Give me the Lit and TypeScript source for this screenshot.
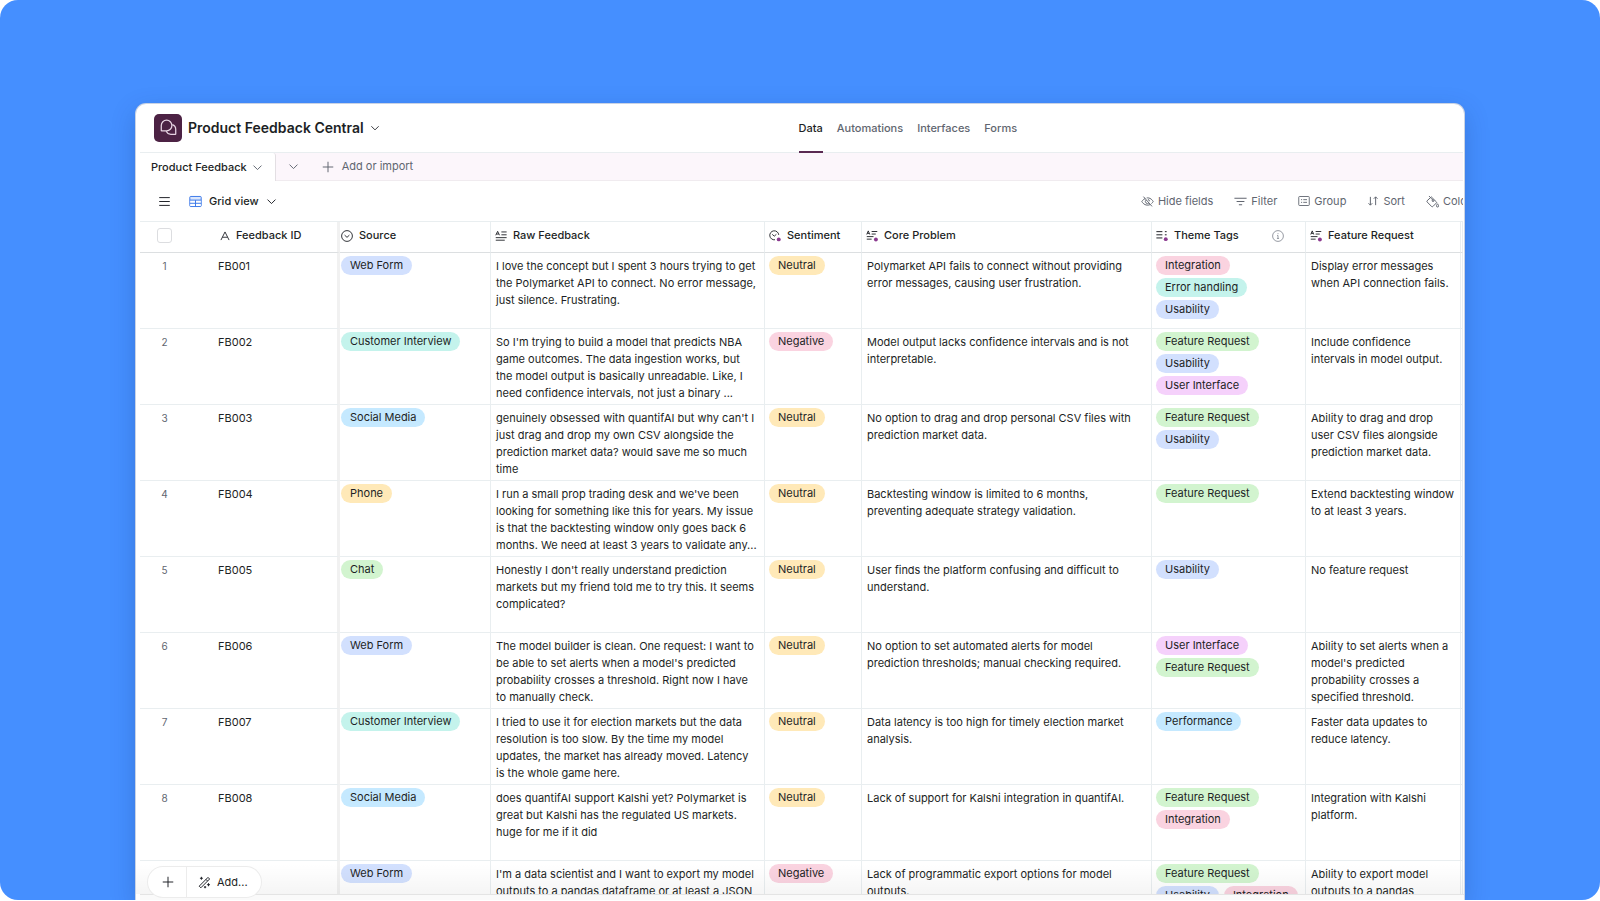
import { LitElement, html, css, svg, nothing, TemplateResult } from "lit";
import { customElement, property, state } from "lit/decorators.js";

type Tone = "blue" | "teal" | "cyan" | "yellow" | "green" | "pink" | "purple";

const TONES: Record<string, Tone> = {
  "Web Form": "blue",
  "Customer Interview": "teal",
  "Social Media": "cyan",
  Phone: "yellow",
  Chat: "green",
  Neutral: "yellow",
  Negative: "pink",
  Integration: "pink",
  "Error handling": "teal",
  Usability: "blue",
  "Feature Request": "green",
  "User Interface": "purple",
  Performance: "cyan",
};

interface Feedback {
  source: string;
  raw: string;
  sentiment: string;
  problem: string;
  tags: string[];
  request: string;
}

const ROWS: Feedback[] = [
  {
    source: "Web Form",
    raw: "I love the concept but I spent 3 hours trying to get the Polymarket API to connect. No error message, just silence. Frustrating.",
    sentiment: "Neutral",
    problem: "Polymarket API fails to connect without providing error messages, causing user frustration.",
    tags: ["Integration", "Error handling", "Usability"],
    request: "Display error messages when API connection fails.",
  },
  {
    source: "Customer Interview",
    raw: "So I'm trying to build a model that predicts NBA game outcomes. The data ingestion works, but the model output is basically unreadable. Like, I need confidence intervals, not just a binary ...",
    sentiment: "Negative",
    problem: "Model output lacks confidence intervals and is not interpretable.",
    tags: ["Feature Request", "Usability", "User Interface"],
    request: "Include confidence intervals in model output.",
  },
  {
    source: "Social Media",
    raw: "genuinely obsessed with quantifAI but why can't I just drag and drop my own CSV alongside the prediction market data? would save me so much time",
    sentiment: "Neutral",
    problem: "No option to drag and drop personal CSV files with prediction market data.",
    tags: ["Feature Request", "Usability"],
    request: "Ability to drag and drop user CSV files alongside prediction market data.",
  },
  {
    source: "Phone",
    raw: "I run a small prop trading desk and we've been looking for something like this for years. My issue is that the backtesting window only goes back 6 months. We need at least 3 years to validate any...",
    sentiment: "Neutral",
    problem: "Backtesting window is limited to 6 months, preventing adequate strategy validation.",
    tags: ["Feature Request"],
    request: "Extend backtesting window to at least 3 years.",
  },
  {
    source: "Chat",
    raw: "Honestly I don't really understand prediction markets but my friend told me to try this. It seems complicated?",
    sentiment: "Neutral",
    problem: "User finds the platform confusing and difficult to understand.",
    tags: ["Usability"],
    request: "No feature request",
  },
  {
    source: "Web Form",
    raw: "The model builder is clean. One request: I want to be able to set alerts when a model's predicted probability crosses a threshold. Right now I have to manually check.",
    sentiment: "Neutral",
    problem: "No option to set automated alerts for model prediction thresholds; manual checking required.",
    tags: ["User Interface", "Feature Request"],
    request: "Ability to set alerts when a model's predicted probability crosses a specified threshold.",
  },
  {
    source: "Customer Interview",
    raw: "I tried to use it for election markets but the data resolution is too slow. By the time my model updates, the market has already moved. Latency is the whole game here.",
    sentiment: "Neutral",
    problem: "Data latency is too high for timely election market analysis.",
    tags: ["Performance"],
    request: "Faster data updates to reduce latency.",
  },
  {
    source: "Social Media",
    raw: "does quantifAI support Kalshi yet? Polymarket is great but Kalshi has the regulated US markets. huge for me if it did",
    sentiment: "Neutral",
    problem: "Lack of support for Kalshi integration in quantifAI.",
    tags: ["Feature Request", "Integration"],
    request: "Integration with Kalshi platform.",
  },
  {
    source: "Web Form",
    raw: "I'm a data scientist and I want to export my model outputs to a pandas dataframe or at least a JSON",
    sentiment: "Negative",
    problem: "Lack of programmatic export options for model outputs.",
    tags: ["Feature Request", "Usability", "Integration"],
    request: "Ability to export model outputs to a pandas",
  },
];

const icon = (size: number, body: TemplateResult | unknown) => html`
  <svg class="icon" width=${size} height=${size} viewBox="0 0 16 16" aria-hidden="true">${body}</svg>
`;

const ICONS = {
  chevron: svg`<path d="M2.200 5.200 8 11l5.800-5.800" stroke-width="1.400"/>`,
  plus: svg`<path d="M8 1v14M1 8h14" stroke-width="1.300"/>`,
  menu: svg`<path d="M1.500 3.200h13M1.500 8h13M1.500 12.800h13" stroke-width="1.200"/>`,
  grid: svg`<rect x="1" y="1.800" width="14" height="12.400" rx="1" fill="#dbe7fd" stroke="#3b77e8"/><path d="M1.600 6.300h12.800v7.300H1.600z" fill="#fff" stroke="none"/><path d="M1 6.300h14M1 10.200h14M8 6.300v8" stroke="#3b77e8"/>`,
  hide: svg`<path d="M3 2l10.500 12M5.200 4.300C2.400 5.600 1 8 1 8s2.200 4.500 7 4.500c1.200 0 2.300-.3 3.200-.7M7 3.600c.3 0 .7-.1 1-.1 4.800 0 7 4.500 7 4.500s-.7 1.400-2.100 2.600M6.300 6.200a2.500 2.500 0 0 0 3.400 3.700M8.500 5.500a2.500 2.500 0 0 1 2 2.200"/>`,
  filter: svg`<path d="M.5 4h15M3.200 8h9.600M6 12h4" stroke-width="1.300"/>`,
  group: svg`<rect x="1" y="2" width="14" height="12" rx="1"/><path d="M4 6.200h1.500M4 9.800h1.500M7 6.200h5M7 9.800h5" />`,
  sort: svg`<path d="M4.500 2.500v11M2 11l2.500 2.500L7 11M11.500 13.500v-11M9 5l2.500-2.500L14 5" stroke-width="1.300"/>`,
  color: svg`<path d="M3.600 1.200l3 3M6.500 2.300l6.300 6.200c.4.400.4.900 0 1.300l-4.400 4.400c-.4.400-1 .4-1.400 0L1.300 8.500c-.4-.4-.4-.9 0-1.300zM6.600 4.200l1.800 2.100"/><circle cx="8.700" cy="7" r="1.100"/><path d="M14.200 10.800s1.300 1.700 1.300 2.700a1.300 1.300 0 0 1-2.600 0c0-1 1.300-2.700 1.300-2.700z"/>`,
  text: svg`<path d="M1.500 14.500 8 1.500l6.500 13M3.900 10h8.200" stroke-width="1.400"/>`,
  select: svg`<circle cx="8" cy="8" r="7.200"/><path d="M4.800 6.800 8 9.800l3.200-3" />`,
  longText: svg`<path d="M1 7 3.500 1.800 6 7M2 5.400h3M8.500 2.600h7M8.500 6.400h7M1 10.200h14.500M1 13.600h12" stroke-width="1.200"/>`,
  aiSelect: svg`<path d="M8 13A6 6 0 1 1 13 6.500M4.300 5.800l2.700 2.400L9.800 5.800" /><circle cx="13" cy="12.500" r="2.600" fill="#8b3a8f" stroke="none"/>`,
  aiText: svg`<path d="M1 6 3 1.200 5 6M1.700 4.500h2.600M7.500 2H15M7.500 5.400h5.500M1 8.800h9M1 12.200h6.500" stroke-width="1.200"/><circle cx="13.200" cy="12.600" r="2.600" fill="#8b3a8f" stroke="none"/>`,
  aiTags: svg`<path d="M.5 2.200h8M.5 6.400h8M.5 10.600h8M11.800 2.200h2.400M11.800 6.400h2.400" stroke-width="1.300"/><circle cx="13" cy="12.200" r="2.600" fill="#8b3a8f" stroke="none"/>`,
  info: svg`<circle cx="8" cy="8" r="7.200"/><path d="M6.800 7.300H8v4M6.600 11.300h2.800M8 4.300v1.200" />`,
  wand: svg`<path d="M1.500 12.500 12.300 1.700l2 2L3.500 14.500zM9.800 4.200l2 2M4.200 1v3.600M2.400 2.800H6M12.900 8.800v3.800M11 10.700h3.800M8.700 12.300v2.800M7.300 13.700h2.800"/>`,
  chat: svg`<path d="M1.200 10.800V6.100a5 5 0 1 1 5 5H1.600c-.3 0-.4-.1-.4-.3z"/><path d="M11.600 5.300a4.700 4.700 0 0 1 3.200 4.500V14c0 .3-.1.400-.4.400h-4.200a4.700 4.700 0 0 1-4.300-3"/>`,
};

@customElement("tag-pill")
export class TagPill extends LitElement {
  @property() label = "";

  static styles = css`
    :host {
      display: block;
    }
    .pill {
      display: block;
      height: 19px;
      line-height: 19px;
      padding: 0 9px;
      border-radius: 10px;
      white-space: nowrap;
    }
    .blue { background: #d2e0fe; }
    .teal { background: #c4f3ec; }
    .cyan { background: #c5e9ff; }
    .yellow { background: #ffe9b8; }
    .green { background: #d2f4cf; }
    .pink { background: #fad3e0; }
    .purple { background: #f5d1fb; }
  `;

  render() {
    return html`<span class="pill ${TONES[this.label] ?? "blue"}">${this.label}</span>`;
  }
}

@customElement("app-root")
export class AppRoot extends LitElement {
  @state() private selected = false;

  static styles = css`
    :host {
      display: block;
      height: 100vh;
      padding-bottom: 1px;
      box-sizing: border-box;
      background: #fff;
      font-family: Inter, "Liberation Sans", sans-serif;
      font-size: 11px;
      line-height: 17px;
      color: #1d1f25;
      --muted: #616670;
      --line: #e9eef0;
    }
    * { box-sizing: border-box; }
    button, a { font: inherit; color: inherit; text-decoration: none; }
    button {
      display: flex;
      align-items: center;
      border: 0;
      padding: 0;
      background: none;
      white-space: nowrap;
    }
    .icon {
      display: block;
      flex: none;
      fill: none;
      stroke: currentColor;
      stroke-width: 1.2;
    }
    .stage {
      height: 100%;
      padding: 104px 8.5% 0;
      border-radius: 18px;
      background: #458fff;
      overflow: hidden;
    }
    .window {
      position: relative;
      display: flex;
      flex-direction: column;
      height: 100%;
      padding: 0 1px 0 4px;
      border-radius: 10px 10px 0 0;
      background: #fff;
      box-shadow: 0 0 0 1px #c9d3e4, 0 8px 24px rgba(20, 50, 110, 0.25);
      overflow: hidden;
    }
    .topbar {
      display: grid;
      grid-template-columns: 1fr 1fr;
      flex: none;
      height: 49px;
      padding: 0 20px 0 14px;
      border-bottom: 1px solid var(--line);
    }
    .brand { gap: 6px; padding-bottom: 2px; font-size: 14px; font-weight: 600; }
    .logo {
      display: grid;
      place-items: center;
      width: 28px;
      height: 28px;
      border-radius: 5px;
      background: #4c2244;
      color: #e6d3e2;
    }
    .title { margin: 0; font: inherit; }
    .sections { display: flex; gap: 14px; font-weight: 500; color: var(--muted); }
    .section { position: relative; display: flex; align-items: center; height: 49px; }
    .section.current { color: #1d1f25; box-shadow: inset 0 -2px #5a2a52; }
    .tabs {
      display: flex;
      flex: none;
      height: 28px;
      background: #fcf6fb;
      border-bottom: 1px solid #f0ebef;
      color: var(--muted);
    }
    .tab {
      gap: 5px;
      height: 28px;
      padding: 0 12px 0 11px;
      border-right: 1px solid #e3dfe3;
      border-radius: 0 3px 0 0;
      background: #fff;
      color: #1d1f25;
      font-weight: 500;
    }
    .tab .icon { color: var(--muted); }
    .more { padding: 0 23px 0 12px; }
    .import { gap: 8px; }
    .toolbar {
      display: flex;
      flex: none;
      align-items: center;
      height: 40px;
      padding-left: 18px;
      overflow: hidden;
    }
    .view { gap: 7px; margin-left: 18px; font-weight: 500; }
    .tools { display: flex; gap: 21px; margin-left: auto; margin-right: -8px; color: var(--muted); }
    .tool { gap: 4px; }
    .sheet { flex: 1; min-height: 0; overflow: hidden; border-top: 1px solid var(--line); }
    .grid { width: 100%; border-collapse: separate; border-spacing: 0; table-layout: fixed; }
    .grid th, .grid td {
      padding: 0;
      border-right: 1px solid var(--line);
      border-bottom: 1px solid var(--line);
      text-align: left;
      vertical-align: top;
      overflow: hidden;
    }
    .grid th { height: 31px; padding-bottom: 3px; border-bottom-color: #dcdfe1; font-weight: 500; vertical-align: middle; }
    .grid .num { border-right: 0; }
    .grid .id { border-right: 3px solid #f1f1f1; }
    .c-num { width: 60px; }
    .c-id { width: 140px; }
    .c-source { width: 151px; }
    .c-raw { width: 274px; }
    .c-sent { width: 97px; }
    .c-prob { width: 290px; }
    .c-tags { width: 154px; }
    .c-end { width: 2px; }
    .head { display: flex; align-items: center; gap: 6px; padding-left: 4px; white-space: nowrap; }
    .head.id-head { padding-left: 20px; }
    .source .head, .source .pills { padding-left: 1px; }
    .info { display: flex; margin-left: auto; margin-right: 21px; color: #8b9099; }
    .check {
      display: block;
      appearance: none;
      width: 15px;
      height: 15px;
      margin: 0 0 0 17px;
      border: 1px solid #dcdde0;
      border-radius: 3px;
      background: #fff;
    }
    .check:checked { background: #3b77e8; }
    .rownum { padding: 5px 0 0 17px; width: 32px; text-align: center; font-size: 10px; color: var(--muted); }
    .ident { padding: 5px 0 0 18px; }
    .copy { height: 75px; padding: 5px 6px 0 5px; overflow: hidden; }
    .copy.request { padding-right: 4px; }
    .pills { display: flex; flex-wrap: wrap; align-content: flex-start; gap: 3px 5px; height: 75px; padding: 3px 3px 0 4px; }
    .foot {
      position: absolute;
      left: 4px;
      right: 0;
      bottom: 0;
      height: 6px;
      border-top: 1px solid #e4e4e4;
      background: #fafafa;
    }
    .fade {
      position: absolute;
      left: 0;
      right: 0;
      bottom: 6px;
      height: 30px;
      background: linear-gradient(rgba(0, 0, 0, 0), rgba(0, 0, 0, 0.04));
    }
    .adder {
      position: absolute;
      left: 12px;
      bottom: 3px;
      display: flex;
      height: 30px;
      border-radius: 15px;
      background: #fff;
      box-shadow: 0 0 0 1px #ececec;
    }
    .add { padding: 0 12px 0 14px; border-right: 1px solid #ececec; }
    .magic { gap: 6px; padding: 0 13px 0 11px; }
  `;

  private head(glyph: unknown, label: string, extra: unknown = nothing, cls = "") {
    return html`<th scope="col" class=${cls}><div class="head">${icon(12, glyph)}<span>${label}</span>${extra}</div></th>`;
  }

  private row(item: Feedback, i: number) {
    return html`
      <tr>
        <td class="num"><div class="rownum">${i < 8 ? i + 1 : nothing}</div></td>
        <td class="id"><div class="ident">${i < 8 ? `FB00${i + 1}` : nothing}</div></td>
        <td class="source"><div class="pills"><tag-pill label=${item.source}></tag-pill></div></td>
        <td><div class="copy">${item.raw}</div></td>
        <td><div class="pills"><tag-pill label=${item.sentiment}></tag-pill></div></td>
        <td><div class="copy">${item.problem}</div></td>
        <td><div class="pills">${item.tags.map((t) => html`<tag-pill label=${t}></tag-pill>`)}</div></td>
        <td><div class="copy request">${item.request}</div></td>
        <td></td>
      </tr>
    `;
  }

  render() {
    return html`
      <div class="stage">
        <main class="window">
          <header class="topbar">
            <button class="brand">
              <span class="logo">${icon(17, ICONS.chat)}</span>
              <h1 class="title">Product Feedback Central</h1>
              ${icon(10, ICONS.chevron)}
            </button>
            <nav class="sections">
              <a class="section current" href="#data">Data</a>
              <a class="section" href="#automations">Automations</a>
              <a class="section" href="#interfaces">Interfaces</a>
              <a class="section" href="#forms">Forms</a>
            </nav>
          </header>
          <div class="tabs">
            <button class="tab">Product Feedback ${icon(11, ICONS.chevron)}</button>
            <button class="more" aria-label="All tables">${icon(11, ICONS.chevron)}</button>
            <button class="import">${icon(12, ICONS.plus)} Add or import</button>
          </div>
          <div class="toolbar">
            <button aria-label="Toggle sidebar">${icon(13, ICONS.menu)}</button>
            <button class="view">${icon(13, ICONS.grid)} Grid view ${icon(11, ICONS.chevron)}</button>
            <div class="tools">
              <button class="tool">${icon(13, ICONS.hide)} Hide fields</button>
              <button class="tool">${icon(13, ICONS.filter)} Filter</button>
              <button class="tool">${icon(12, ICONS.group)} Group</button>
              <button class="tool">${icon(12, ICONS.sort)} Sort</button>
              <button class="tool">${icon(13, ICONS.color)} Color</button>
            </div>
          </div>
          <div class="sheet">
            <table class="grid">
              <colgroup>
                <col class="c-num" /><col class="c-id" /><col class="c-source" /><col class="c-raw" />
                <col class="c-sent" /><col class="c-prob" /><col class="c-tags" /><col /><col class="c-end" />
              </colgroup>
              <thead>
                <tr>
                  <th class="num">
                    <input
                      class="check"
                      type="checkbox"
                      aria-label="Select all records"
                      .checked=${this.selected}
                      @change=${() => (this.selected = !this.selected)}
                    />
                  </th>
                  <th class="id" scope="col"><div class="head id-head">${icon(10, ICONS.text)}<span>Feedback ID</span></div></th>
                  ${this.head(ICONS.select, "Source", nothing, "source")}
                  ${this.head(ICONS.longText, "Raw Feedback")}
                  ${this.head(ICONS.aiSelect, "Sentiment")}
                  ${this.head(ICONS.aiText, "Core Problem")}
                  ${this.head(ICONS.aiTags, "Theme Tags", html`<span class="info">${icon(12, ICONS.info)}</span>`)}
                  ${this.head(ICONS.aiText, "Feature Request")}
                  <th></th>
                </tr>
              </thead>
              <tbody>
                ${ROWS.map((r, i) => this.row(r, i))}
              </tbody>
            </table>
          </div>
          <div class="fade"></div>
          <div class="foot"></div>
          <div class="adder">
            <button class="add" aria-label="Add record">${icon(12, ICONS.plus)}</button>
            <button class="magic">${icon(13, ICONS.wand)} Add...</button>
          </div>
        </main>
      </div>
    `;
  }
}
